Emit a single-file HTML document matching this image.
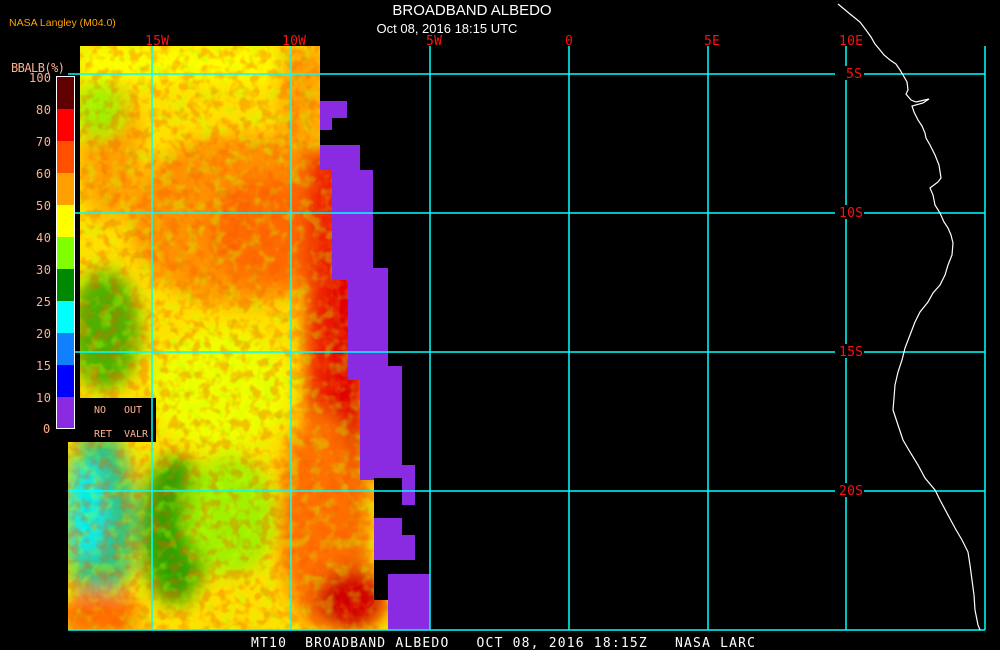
<!DOCTYPE html>
<html><head><style>
html,body{margin:0;padding:0;background:#000;width:1000px;height:650px;overflow:hidden}
svg{display:block}
text{font-family:"DejaVu Sans Mono","Liberation Mono",monospace}
</style></head><body>
<svg width="1000" height="650" viewBox="0 0 1000 650" xmlns="http://www.w3.org/2000/svg">
<defs>
<filter id="b" x="-20%" y="-20%" width="140%" height="140%"><feGaussianBlur stdDeviation="9"/></filter>
<filter id="n" x="0" y="0" width="100%" height="100%">
<feTurbulence type="fractalNoise" baseFrequency="0.1" numOctaves="2" seed="3"/>
<feColorMatrix type="matrix" values="0 0 0 0 0.9  0 0 0 0 0.1  0 0 0 0 0  0 0 0 -4 2.2"/>
</filter>
<filter id="g" x="0" y="0" width="100%" height="100%">
<feTurbulence type="fractalNoise" baseFrequency="0.08" numOctaves="2" seed="11"/>
<feColorMatrix type="matrix" values="0 0 0 0 0.55  0 0 0 0 1  0 0 0 0 0  0 0 0 -4 2.1"/>
</filter>
<clipPath id="c">
<path d="M80 46 H320 V170 H332 V268 H348 V380 H360 V480 H374 V600 H388 V630 H68 V442 H80 Z"/>
</clipPath>
</defs>
<rect width="1000" height="650" fill="#000"/>
<g clip-path="url(#c)">
<rect x="60" y="40" width="340" height="600" fill="#ffe000"/>
<g filter="url(#b)">
<rect x="80" y="46" width="240" height="35" fill="#ffff00"/>
<rect x="280" y="46" width="45" height="100" fill="#ffa000"/>
<ellipse cx="240" cy="220" rx="110" ry="85" fill="#ff9000"/>
<ellipse cx="270" cy="230" rx="60" ry="55" fill="#ff6a00"/>
<rect x="305" y="150" width="45" height="280" fill="#f02000"/>
<rect x="330" y="250" width="35" height="360" fill="#e00000"/>
<ellipse cx="110" cy="150" rx="30" ry="70" fill="#ffa000"/>
<ellipse cx="100" cy="110" rx="25" ry="30" fill="#a0f000"/>
<ellipse cx="105" cy="330" rx="35" ry="60" fill="#50b000"/>
<ellipse cx="220" cy="390" rx="70" ry="60" fill="#f0ff00"/>
<ellipse cx="100" cy="520" rx="35" ry="90" fill="#30c080"/>
<ellipse cx="88" cy="510" rx="18" ry="50" fill="#00f0f0"/>
<ellipse cx="175" cy="530" rx="35" ry="75" fill="#30a000"/>
<ellipse cx="230" cy="515" rx="45" ry="60" fill="#a0f000"/>
<ellipse cx="320" cy="520" rx="40" ry="110" fill="#ff7000"/>
<ellipse cx="100" cy="615" rx="40" ry="25" fill="#ff7000"/>
<ellipse cx="350" cy="600" rx="35" ry="30" fill="#d00000"/>
</g>
<rect x="60" y="40" width="340" height="600" filter="url(#g)" opacity="0.35"/>
<rect x="60" y="40" width="340" height="600" filter="url(#n)" opacity="0.35"/>
</g>
<g fill="#8a2be2">
<path d="M320 101 H347 V118 H332 V130 H320 Z"/>
<path d="M320 145 H360 V170 H373 V268 H388 V366 H402 V465 H415 V505 H402 V478 H374 V480 H360 V380 H348 V280 H332 V170 H320 Z"/>
<path d="M374 518 H402 V535 H415 V560 H374 Z"/>
<rect x="388" y="574" width="42" height="56"/>
</g>
<rect x="68" y="398" width="88" height="44" fill="#000"/>
<g stroke="#00ffff" stroke-width="1.5" fill="none">
<line x1="152" y1="46" x2="152" y2="630"/>
<line x1="291" y1="46" x2="291" y2="630"/>
<line x1="430" y1="46" x2="430" y2="630"/>
<line x1="569" y1="46" x2="569" y2="630"/>
<line x1="708" y1="46" x2="708" y2="630"/>
<line x1="846" y1="46" x2="846" y2="630"/>
<line x1="985" y1="46" x2="985" y2="630"/>
<line x1="68" y1="74" x2="835" y2="74"/><line x1="864" y1="74" x2="985" y2="74"/>
<line x1="68" y1="213" x2="835" y2="213"/><line x1="864" y1="213" x2="985" y2="213"/>
<line x1="68" y1="352" x2="835" y2="352"/><line x1="864" y1="352" x2="985" y2="352"/>
<line x1="68" y1="491" x2="835" y2="491"/><line x1="864" y1="491" x2="985" y2="491"/>
<line x1="68" y1="630" x2="985" y2="630"/>
</g>
<rect x="836" y="66" width="28" height="14" fill="#000"/>
<rect x="836" y="205" width="28" height="14" fill="#000"/>
<rect x="836" y="344" width="28" height="14" fill="#000"/>
<rect x="836" y="483" width="28" height="14" fill="#000"/>
<polyline fill="none" stroke="#fff" stroke-width="1.2" points="838,4 850,14 860,22 866,30 871,37 875,44 880,50 884,55 890,60 896,64 900,70 903,75 907,82 908,90 906,94 911,100 916,102 929,99 923,103 912,106 914,112 918,120 922,126 925,133 926,138 930,145 935,155 939,165 941,178 938,182 930,188 933,195 935,205 940,213 944,222 948,228 951,235 953,243 952,255 948,265 945,275 940,285 933,293 928,302 920,312 915,322 910,335 905,348 902,360 898,372 895,385 894,398 893,410 898,425 903,440 910,452 918,465 925,478 935,490 940,500 948,515 955,528 962,540 968,552 970,565 972,580 974,595 975,610 978,625 980,630"/>
<g fill="#ff1010" font-size="13">
<text x="145" y="45" textLength="24">15W</text>
<text x="282" y="45" textLength="24">10W</text>
<text x="426" y="45" textLength="16">5W</text>
<text x="565" y="45">0</text>
<text x="704" y="45" textLength="16">5E</text>
<text x="839" y="45" textLength="24">10E</text>
<text x="846" y="78" textLength="16">5S</text>
<text x="839" y="217" textLength="24">10S</text>
<text x="839" y="356" textLength="24">15S</text>
<text x="839" y="495" textLength="24">20S</text>
</g>
<text x="472" y="15" fill="#fff" font-size="15" text-anchor="middle" style="font-family:'Liberation Sans',sans-serif">BROADBAND ALBEDO</text>
<text x="447" y="33" fill="#fff" font-size="13" text-anchor="middle" style="font-family:'Liberation Sans',sans-serif">Oct 08, 2016 18:15 UTC</text>
<text x="9" y="26" fill="#ffa500" font-size="10.5" style="font-family:'Liberation Sans',sans-serif">NASA Langley (M04.0)</text>
<g fill="#ffb090" font-size="12">
<text x="11" y="72" textLength="54">BBALB(%)</text>
<text x="29" y="82" textLength="22">100</text>
<text x="36" y="114" textLength="15">80</text>
<text x="36" y="146" textLength="15">70</text>
<text x="36" y="178" textLength="15">60</text>
<text x="36" y="210" textLength="15">50</text>
<text x="36" y="242" textLength="15">40</text>
<text x="36" y="274" textLength="15">30</text>
<text x="36" y="306" textLength="15">25</text>
<text x="36" y="338" textLength="15">20</text>
<text x="36" y="370" textLength="15">15</text>
<text x="36" y="402" textLength="15">10</text>
<text x="43" y="433">0</text>
<text x="94" y="413" font-size="10" textLength="12">NO</text>
<text x="124" y="413" font-size="10" textLength="18">OUT</text>
<text x="94" y="437" font-size="10" textLength="18">RET</text>
<text x="124" y="437" font-size="10" textLength="24">VALR</text>
</g>
<g>
<rect x="57" y="77" width="17" height="32" fill="#600000"/>
<rect x="57" y="109" width="17" height="32" fill="#ff0000"/>
<rect x="57" y="141" width="17" height="32" fill="#ff5000"/>
<rect x="57" y="173" width="17" height="32" fill="#ffa000"/>
<rect x="57" y="205" width="17" height="32" fill="#ffff00"/>
<rect x="57" y="237" width="17" height="32" fill="#80ff00"/>
<rect x="57" y="269" width="17" height="32" fill="#008800"/>
<rect x="57" y="301" width="17" height="32" fill="#00ffff"/>
<rect x="57" y="333" width="17" height="32" fill="#1080ff"/>
<rect x="57" y="365" width="17" height="32" fill="#0000ff"/>
<rect x="57" y="397" width="17" height="31" fill="#8a2be2"/>
<rect x="56.5" y="76.5" width="18" height="352" fill="none" stroke="#fff" stroke-width="1"/>
</g>
<text x="251" y="647" fill="#fff" font-size="13" textLength="504" xml:space="preserve">MT10  BROADBAND ALBEDO   OCT 08, 2016 18:15Z   NASA LARC</text>
</svg>
</body></html>
